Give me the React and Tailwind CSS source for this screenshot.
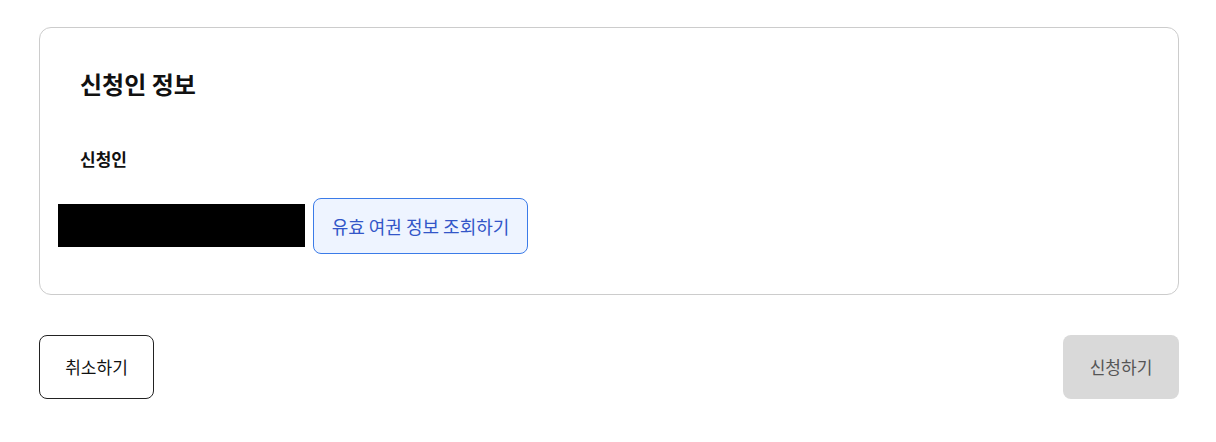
export default function App() {
  const font = { fontFamily: '"Noto Sans CJK KR", "Noto Sans", sans-serif' };
  return (
    <div className="min-h-screen bg-white pl-[39px] pt-[27px]" style={font}>
      <div className="w-[1140px]">
        <section className="rounded-xl border border-[#cccccc] px-10 pt-10 pb-10">
          <h2 className="text-[24px] font-bold leading-8 text-[#111111]">신청인 정보</h2>
          <p className="mt-[47px] text-[17px] font-bold leading-6 text-[#111111]">신청인</p>
          <div className="mt-[27px] flex items-center gap-2 -ml-[22px]">
            <div className="mb-[1px] h-[43px] w-[247px] bg-black" />
            <button className="h-14 w-[215px] rounded-lg border border-[#3b7be8] bg-[#eef4ff] text-[18px] text-[#3356c8]">
              유효 여권 정보 조회하기
            </button>
          </div>
        </section>
        <div className="mt-10 flex items-center justify-between">
          <button className="h-16 w-[115px] rounded-lg border border-[#222222] bg-white text-[17px] text-[#111111]">
            취소하기
          </button>
          <button className="h-16 w-[116px] rounded-lg bg-[#d9d9d9] text-[17px] text-[#555555]">
            신청하기
          </button>
        </div>
      </div>
    </div>
  );
}
